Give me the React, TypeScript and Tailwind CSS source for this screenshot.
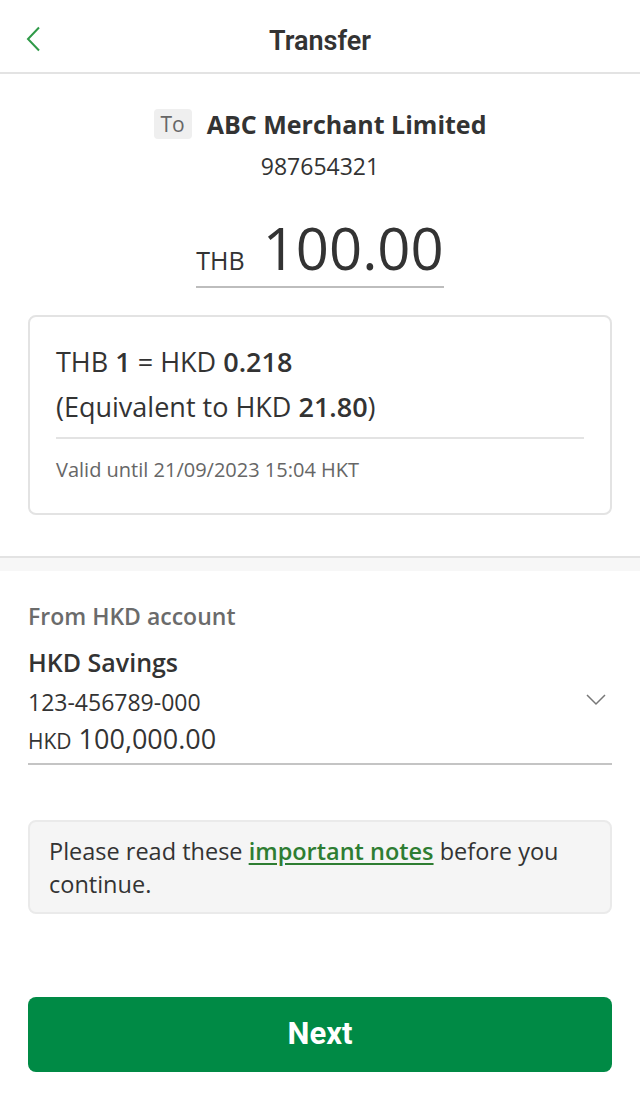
export default function App() {
  return (
    <div
      className="flex min-h-[1100px] w-[640px] flex-col bg-white text-[#333]"
      style={{ fontFamily: '"Open Sans", "Noto Sans", sans-serif' }}
    >
      {/* Header */}
      <div className="relative flex h-[74px] items-center justify-center border-b-2 border-[#e3e3e3]">
        <button className="absolute top-[26px] left-[24px]">
          <svg className="h-[26px] w-[20px] text-[#2f9a48]" viewBox="0 0 20 26" fill="none" stroke="currentColor" strokeWidth="2">
            <path d="M15 1.5L4 13l11 11.5" />
          </svg>
        </button>
        <h1 className="mt-[11px] text-[27px] font-semibold text-[#333]" style={{ fontFamily: 'Roboto, sans-serif' }}>
          Transfer
        </h1>
      </div>

      {/* Payee */}
      <div className="flex flex-col items-center pt-[33px]">
        <div className="flex items-center gap-[15px]">
          <span className="rounded-[4px] bg-[#efefef] px-[7px] py-[1px] text-[21px] leading-[28px] text-[#666]">To</span>
          <span className="text-[25px] font-bold leading-[34px] text-[#333]">ABC Merchant Limited</span>
        </div>
        <div className="mt-[10px] text-[23px] leading-[30px] text-[#333]">987654321</div>

        <div className="mt-[33px] flex items-baseline gap-[18px] border-b-2 border-[#bdbdbd] pb-[4px]">
          <span className="text-[25px] text-[#333]">THB</span>
          <span className="text-[58px] leading-[68px] text-[#333]">100.00</span>
        </div>
      </div>

      {/* Rate card */}
      <div className="mx-[28px] mt-[27px] rounded-[8px] border-2 border-[#e3e3e3] px-[26px] pt-[22px] pb-[30px]">
        <div className="text-[27px] leading-[45px] text-[#333]">
          THB <b className="font-semibold">1</b> = HKD <b className="font-semibold">0.218</b>
        </div>
        <div className="text-[27px] leading-[45px] text-[#333]">
          (Equivalent to HKD <b className="font-semibold">21.80</b>)
        </div>
        <div className="mt-[8px] border-t-2 border-[#e3e3e3]" />
        <div className="mt-[18px] text-[20px] leading-[26px] text-[#666]">Valid until 21/09/2023 15:04 HKT</div>
      </div>

      {/* Section divider */}
      <div className="mt-[41px] h-[15px] border-t-2 border-[#e3e3e3] bg-[#f7f7f7]" />

      {/* From account */}
      <div className="mx-[28px] mt-[30px]">
        <div className="text-[23px] font-semibold leading-[30px] text-[#6b6b6b]">From HKD account</div>
        <div className="mt-[14px] flex items-center justify-between border-b-2 border-[#c4c4c4] pb-[3px]">
          <div>
            <div className="text-[25px] font-semibold leading-[34px] text-[#333]">HKD Savings</div>
            <div className="mt-[5px] text-[23px] leading-[36px] text-[#333]">123-456789-000</div>
            <div className="flex items-baseline gap-[7px] leading-[37px]">
              <span className="text-[21px] text-[#333]">HKD</span>
              <span className="text-[27px] text-[#333]">100,000.00</span>
            </div>
          </div>
          <svg className="mr-[6px] mb-[6px] h-[12px] w-[20px] text-[#777]" viewBox="0 0 20 12" fill="none" stroke="currentColor" strokeWidth="1.5">
            <path d="M1 1l9 9 9-9" />
          </svg>
        </div>
      </div>

      {/* Notes */}
      <div className="mx-[28px] mt-[55px] rounded-[8px] border-2 border-[#eaeaea] bg-[#f5f5f5] px-[19px] pt-[13px] pb-[11px] text-[23.5px] leading-[33px] text-[#333]">
        Please read these{' '}
        <a className="font-semibold text-[#2e7d32] underline underline-offset-[3px]">important notes</a> before you continue.
      </div>

      {/* Next */}
      <div className="mx-[28px] mt-[83px]">
        <button
          className="flex h-[75px] w-full items-center justify-center rounded-[8px] bg-[#008a45] text-[31px] font-bold text-white"
          style={{ fontFamily: 'Roboto, sans-serif' }}
        >
          Next
        </button>
      </div>
    </div>
  )
}
